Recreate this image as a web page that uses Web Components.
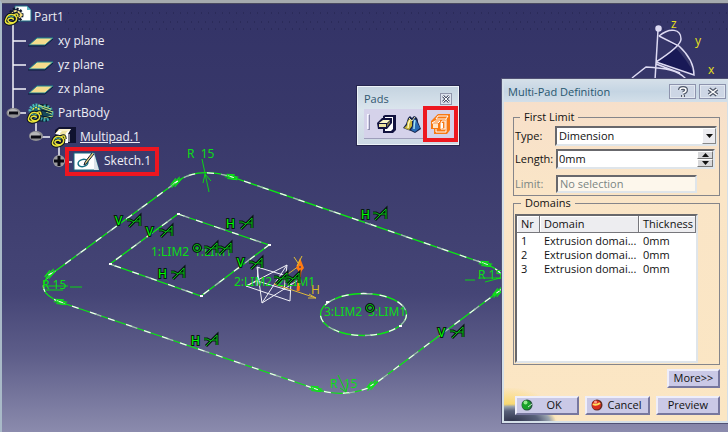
<!DOCTYPE html>
<html lang="en">
<head>
<meta charset="utf-8">
<meta name="viewport" content="width=device-width, initial-scale=1">
<title>Part1 – Multi-Pad Definition</title>
<style>
html,body{margin:0}
body{font:12px/14px "Open Sans","Noto Sans",sans-serif;background:#38386a}
</style>
</head>
<body>
<cad-workbench></cad-workbench>
<script>
const define = (name, html) => {
  const template = document.createElement('template');
  template.innerHTML = '<style>*{box-sizing:border-box}</style>' + html;
  customElements.define(name, class extends HTMLElement {
    constructor() {
      super();
      this.attachShadow({mode: 'open'}).append(template.content.cloneNode(true));
    }
  });
};

/* One row of the specification tree: artwork slot, then label slot. */
define('tree-node', `
<style>
:host{display:flex;align-items:center;gap:5px;height:24px;color:#eeeef6}
.content{display:flex;align-items:center;gap:5px}
:host([framed]){gap:4px}
:host([framed]) .content{height:21px;padding:0 4px 0 5px;outline:4px solid #ee1620}
:host([active]) .label{text-decoration:underline}
::slotted(svg){display:block;overflow:visible;flex:none}
.label{white-space:nowrap}
</style>
<slot name="rail"></slot><span class="content"><slot name="icon"></slot><span class="label"><slot></slot></span></span>`);

const plane = `<svg slot="rail" width="53" height="24" viewBox="0 0 53 24"><path class="w" d="M13 0V24M13 12H26"/><path d="M29 16L37 9H53L45 16Z" fill="#f5dc8d" stroke="#1e8790"/><path d="M28 17H45L53 10" fill="none" stroke="#0d1c3c"/></svg>`;
const swirl = `<path d="M1 7Q3 1 9 3Q13 5 11 9Q8 12 4 10Q1 7 6 6Q9 6 8 8M1 7Q-1 11 4 12Q8 12 11 9M9 3Q13 0 13 5" fill="none" stroke="#0b1422" stroke-width="3.500"/><path d="M1 7Q3 1 9 3Q13 5 11 9Q8 12 4 10Q1 7 6 6Q9 6 8 8M1 7Q-1 11 4 12Q8 12 11 9M9 3Q13 0 13 5" fill="none" stroke="#eae43a" stroke-width="1.500"/><path d="M3 5Q6 3 9 5" fill="none" stroke="#3aa5a0"/>`;

define('model-tree', `
<style>
:host{display:block;padding-top:5px;font-size:12px}
.w{stroke:#f4f4fa;stroke-width:1.5;fill:none}
</style>
<tree-node>
 <svg slot="rail" width="29" height="24" viewBox="0 0 29 24">
  <path class="w" d="M13 16V24"/>
  <path d="M15 1H27L31 5V16H15Z" fill="#fff" stroke="#1b6f80"/><path d="M27 1V5H31Z" fill="#5ab4c4"/>
  <circle cx="16" cy="10" r="6" fill="#0c1838" stroke="#101a30" stroke-width="3" stroke-dasharray="2 1.500"/><circle cx="16" cy="10" r="4" fill="none" stroke="#f0dc88" stroke-width="2" stroke-dasharray="3 1"/>
  <path d="M20 7L23 10L20 13" fill="#f3dc7a"/>
  <g transform="translate(5 7)">${swirl}</g>
 </svg>Part1</tree-node>
<tree-node>${plane}xy plane</tree-node>
<tree-node>${plane}yz plane</tree-node>
<tree-node>${plane}zx plane</tree-node>
<tree-node>
 <svg slot="rail" width="53" height="24" viewBox="0 0 53 24">
  <path class="w" d="M13 0V12H26M36 18V24"/>
  <ellipse cx="13.500" cy="12" rx="7" ry="5" fill="#8f8f93"/><ellipse cx="13" cy="11" rx="5" ry="3" fill="#b6b6b8"/><path d="M9 12H18" stroke="#0c0c14" stroke-width="3"/>
  <path d="M32 3L47 3L52 8L53 17L46 21L34 20Z" fill="#0d2438"/>
  <circle cx="36" cy="10" r="6" fill="#1b6470" stroke="#4fbac0" stroke-width="3" stroke-dasharray="2 1"/>
  <ellipse cx="45" cy="12" rx="7" ry="7" fill="#16485a" stroke="#3da4aa" stroke-width="3" stroke-dasharray="2 1.500"/>
  <path d="M38 4L51 8M42 7L53 11M44 17L53 15M46 11L52 13" stroke="#c4e070"/><path d="M41 9L52 12M42 15L52 17" stroke="#0a1428"/>
  <circle cx="36" cy="10" r="3.500" fill="none" stroke="#eee94e" stroke-width="1.500" stroke-dasharray="2 1"/>
  <g transform="translate(28 9)">${swirl}</g>
 </svg>PartBody</tree-node>
<tree-node active>
 <svg slot="rail" width="75" height="24" viewBox="0 0 75 24">
  <path class="w" d="M36 0V12H50M59 18V24"/>
  <ellipse cx="36" cy="11" rx="7" ry="5" fill="#8f8f93"/><ellipse cx="35" cy="10" rx="5" ry="3" fill="#b6b6b8"/><path d="M31 12H41" stroke="#0c0c14" stroke-width="3"/>
  <path d="M55 5L59 2H76V18H55Z" fill="#10122f"/><path d="M55 9L59 4H71L68 9V18H65V9H62V17H59V10Z" fill="#fff"/><path d="M60 8L62 6H68L66 8V15L63 17H60Z" fill="#f0e5a4"/><path d="M56 8L59 5H70" fill="none" stroke="#f6e39a"/><path d="M69 9V17" stroke="#fff"/>
  <g transform="translate(52 9)">${swirl}</g>
 </svg>Multipad.1</tree-node>
<tree-node framed>
 <svg slot="rail" width="65" height="24" viewBox="0 0 65 24">
  <path class="w" d="M59 0V8"/><circle cx="59" cy="12" r="6" fill="#9b9b9e"/><path d="M54 12H64M59 7V17" stroke="#0a0a12" stroke-width="3"/>
 </svg>
 <svg slot="icon" width="25" height="17" viewBox="0 0 25 17">
  <path d="M-5 9H-2" class="w"/><path d="M0 0H20L25 17H0Z" fill="#fff" stroke="#176d80"/><path d="M20 0L25 17H20Z" fill="#dce4ea"/>
  <ellipse cx="9" cy="10" rx="5" ry="3.500" fill="none" stroke="#136f82" stroke-width="1.500" transform="rotate(-15 9 10)"/>
  <path d="M20 1L12 11L10 12L11 9L18 0" fill="#e7d57c" stroke="#121f35"/>
 </svg>Sketch.1</tree-node>`);

/* Free drawing canvas holding the sketch, its constraints and the compass. */
define('sketch-view', `
<style>
:host{display:block;overflow:hidden;background:linear-gradient(#333367 0,#38386a 28%,#404071 52%,#454576 68%,#5d5d89 82%,#8b8bad 100%)}
svg{display:block;width:100%;height:100%}
text{font:12px "Noto Sans","Open Sans",sans-serif;white-space:pre}
.dim{fill:#0cde16}
.mark{fill:#0f0;stroke:#061a10;stroke-width:2;paint-order:stroke}
.axis{fill:#e2dc20}
</style>
<svg viewBox="0 0 728 432" preserveAspectRatio="xMinYMin slice" role="img" aria-label="Sketch with three closed domains">
<defs>
 <g id="shapes"><path d="M178 181L50 275C40 284 40 294 60 302L316 389C335 396 357 394 372 386L498 292C508 284 506 272 486 264L232 177C212 171 192 171 178 181Z"/><path d="M178 214L269 245L201 296L110 264Z"/><ellipse cx="363.500" cy="314.500" rx="43" ry="21"/></g>
 <g id="rel" fill="none"><path d="M-7 -1H-4L0 1L-5 6M0 1L6 -5V5M1 0H6" stroke="#071a10" stroke-width="3"/><path d="M-7 -1H-4L0 1L-5 6M0 1L6 -5V5M1 0H6" stroke="#07c113"/></g>
 <g id="tan" fill="none" stroke="#0be813"><ellipse rx="5" ry="1.500"/><path d="M-7 2L6 -2M-4 3L6 1M-6 -1L2 -3"/><path d="M-2 0H2" stroke="#fff"/></g>
 <g id="coin"><circle r="3.500" fill="none" stroke="#071a10" stroke-width="3"/><circle r="3.500" fill="none" stroke="#07c113"/><circle r="1" fill="#07c113"/></g>
 <pattern id="dots" width="7" height="16" patternUnits="userSpaceOnUse"><path d="M2 6h1M5 13h1" stroke="#22224c"/></pattern>
</defs>
<rect x="64" y="8" width="664" height="25" fill="url(#dots)"/>
<g fill="none" stroke-width="1.300"><use href="#shapes" stroke="#0be813"/><use href="#shapes" stroke="#f4f4f6" stroke-dasharray="7 12"/><use href="#shapes" stroke="#a9a9bf" stroke-dasharray="6 32" stroke-dashoffset="-6"/></g>
<g fill="#fff"><path d="M177 213h3v2h-3zM268 244h3v2h-3zM200 295h3v2h-3zM109 263h3v2h-3zM326 301h3v2h-3zM399 325h3v2h-3z"/></g>
<use href="#tan" transform="translate(176 182) rotate(-37)"/><use href="#tan" transform="translate(232 177) rotate(18)"/><use href="#tan" transform="translate(50 274) rotate(-37)"/><use href="#tan" transform="translate(61 302) rotate(18)"/><use href="#tan" transform="translate(316 389) rotate(18)"/><use href="#tan" transform="translate(372 385) rotate(-37)"/><use href="#tan" transform="translate(486 264) rotate(18)"/><use href="#tan" transform="translate(498 292) rotate(-37)"/>
<g fill="none" stroke="#0bd515"><path d="M202 159L209 192M205 174L203 183M205 174L211 181M43 286H68M70 287H82M45 290H63M465 280H475M485 282L504 277M478 278H504M338 375L346 392L340 388M346 392L348 383"/></g>
<g class="dim"><text x="187" y="158">R  15</text><text x="42" y="289">R 15</text><text x="478" y="279">R 15</text><text x="330" y="388">R  15</text>
<text x="151" y="256">1:LIM2</text><text x="194" y="256">1:LIM1</text></g>
<g fill="none" stroke="#f1f1f7"><path d="M258 267L257 286M246 286L287 265L284 290M246 286L290 301L291 281M257 267L262 303L300 279M257 267L300 280M262 303L287 265M246 286L257 281L291 291"/></g>
<g fill="none" stroke="#dbb83b"><path d="M274 284L316 298L309 294M316 298L308 298M274 284L299 266"/></g>
<path d="M298 291L300 270" stroke="#ff7a12" stroke-width="3"/><path d="M300 258L304 268L300 273L296 268Z" fill="#ff7a12"/><path d="M294 257L298 263M302 256L297 266" stroke="#e0c036" fill="none"/><circle cx="300" cy="267" r="1" fill="#4a4566"/>
<g class="dim"><text x="234" y="286">2:LIM2</text><text x="277" y="286">2:LIM1</text><text x="324" y="316">3:LIM2</text><text x="368" y="316">3:LIM1</text></g>
<text x="311" y="294" fill="#d8bb20">H</text>
<g class="mark"><text x="115" y="225">V</text><text x="146" y="236">V</text><text x="226" y="228">H</text><text x="361" y="219">H</text><text x="158" y="278">H</text><text x="237" y="267">V</text><text x="191" y="345">H</text><text x="438" y="337">V</text></g>
<use href="#rel" x="134" y="221"/><use href="#rel" x="166" y="231"/><use href="#rel" x="246" y="223"/><use href="#rel" x="380" y="214"/><use href="#rel" x="178" y="273"/><use href="#rel" x="256" y="263"/><use href="#rel" x="211" y="340"/><use href="#rel" x="457" y="332"/><use href="#rel" x="211" y="248"/><use href="#rel" x="225" y="248"/><use href="#rel" x="281" y="278"/><use href="#rel" x="293" y="278"/>
<use href="#coin" x="197" y="248"/><use href="#coin" x="370" y="308"/>
<g fill="none" stroke="#dedbf3" stroke-width="1.500"><path d="M659 36Q678 44 695 75L656 62L680 45Z" fill="#191956" stroke="none"/><path d="M658 30L655 80M659 36C670 27 681 29 681 39Q681 46 656 62M659 36L679 46Q694 60 694 75L656 62M632 78L646 67C665 68 678 70 686 79M656 64L680 73"/><circle cx="658.500" cy="28.500" r="2.500" fill="#dedbf3"/></g>
<g class="axis"><text x="671" y="28">z</text><text x="695" y="45">y</text><text x="708" y="74">x</text></g>
</svg>`);

define('pads-toolbar', `
<style>
:host{display:block;width:102px;padding:2px 3px 5px 6px;border:1px solid #edf3f8;outline:1px solid #26264f;background:linear-gradient(#c5d4e1,#dbe5ed 40%,#cdd9e4);font-size:11px}
header{display:flex;align-items:center;justify-content:space-between;height:20px;padding-right:3px;color:#31576f}
.close{width:12px;height:12px;padding:0;border:1px solid #9197ac;background:#dce2ed;display:grid;place-items:center}
.tools{display:flex;align-items:center;height:30px;gap:5px;background:#d5d2ea;border-bottom:1px solid #9e9ebb}
.grip{width:3px;height:16px;border:1px solid;border-color:#f7f7ff #8e8eae #8e8eae #f7f7ff;margin:0 2px 3px 3px}
.tool{width:20px;height:22px;padding:0;border:0;background:none;display:grid;place-items:center}
.tool[aria-pressed=true]{outline:4px solid #ed1820;width:27px;height:28px}
svg{display:block}
</style>
<header><span>Pads</span><button class="close" aria-label="Close"><svg width="8" height="8" viewBox="0 0 8 8"><path d="M1 1L7 7M7 1L1 7" stroke="#4e566c" stroke-width="2.500"/><path d="M1 1L7 7M7 1L1 7" stroke="#fff"/></svg></button></header>
<div class="tools"><span class="grip"></span>
<button class="tool" aria-label="Drafted filleted pad"><svg width="20" height="20" viewBox="0 0 20 20"><path d="M6 2L8 1H19V16L16 19H6Z" fill="#12123f"/><path d="M8 3H16V15L14 17H8Z" fill="#fff"/><path d="M0 9L5 4H15V9L10 15H1Z" fill="#12123f"/><path d="M2 9L6 6H13L10 9Z" fill="#fbf6c4"/><path d="M2 10H9V13H2Z" fill="#eee4a0"/><path d="M10 10L13 7V9L10 13Z" fill="#8a814c"/></svg></button>
<button class="tool" aria-label="Pad"><svg width="20" height="20" viewBox="0 0 20 20"><path d="M6 4L8 2L10 4L12 2Q16 3 16 8L19 15L13 19L9 17L6 16L1 14L4 10Z" fill="#14204a"/><path d="M7 5Q5 7 5 11L2 14L7 16L10 12V6Z" fill="#c9b43b"/><path d="M8 6Q6 9 6 14" stroke="#fff8b7" stroke-width="1.500" fill="none"/><path d="M11 6Q14 4 15 8L18 14L13 18L9 16L11 12Z" fill="#2a6cb4"/><path d="M13 6Q12 10 12 15" stroke="#a7e1f0" stroke-width="1.500" fill="none"/><path d="M7 4L10 7L13 3" fill="none" stroke="#e9e3b0"/></svg></button>
<button class="tool" aria-label="Multi-pad" aria-pressed="true"><svg width="21" height="20" viewBox="0 0 21 20"><path d="M4 4L8 0H20V16L17 20H4V15H1V7Z" fill="#f87914"/><path d="M6 5L8 2H18L16 5H6M16 5V18H6V15" fill="none" stroke="#fff"/><path d="M2 9L5 7H10L8 9ZM11 9L12 7H15V15H11Z" fill="none" stroke="#fff"/><path d="M3 10H8V14H3Z" fill="#ffe6c8"/><path d="M12 9V14" stroke="#fff" stroke-width="2"/></svg></button>
</div>`);

define('push-button', `
<style>
:host{display:block}
button{display:flex;align-items:center;width:100%;height:19px;padding:0 2px 1px;border:2px solid;border-color:#eeeefa #77779e #77779e #eeeefa;background:#cac9e6;font:inherit;color:#111}
span{flex:1;text-align:center;white-space:nowrap}
::slotted(svg){flex:none;display:block;margin-left:2px}
</style>
<button><slot name="icon"></slot><span><slot></slot></span></button>`);

define('multi-pad-dialog', `
<style>
:host{display:block;border:2px solid #d4dfe8;border-right-width:1px;outline:1px solid #515174;background:linear-gradient(#f6decb,#fae5c7 30%,#fbe6c3);color:#111;font-size:11px}
header{display:flex;align-items:center;gap:3px;height:21px;padding:0 1px 0 4px;background:linear-gradient(#d3dee8,#c5d5e3 50%,#d3dfe9);color:#27566e}
h1{flex:1;margin:0;font:inherit;white-space:nowrap}
header button{width:27px;height:15px;padding:0;border:1px solid #8d93ad;background:#cdd6e5;display:grid;place-items:center;box-shadow:inset 0 0 0 1px #e1e7f0}
header svg{display:block}
form{display:block;padding:8px 7px 6px 9px}
fieldset{min-width:0;margin:0;padding:2px 2px 2px 0;border:1px solid #85858a}
legend{margin-left:6px;padding:0 4px}
.limits{display:grid;grid-template-columns:41px 1fr;row-gap:3px;align-items:center}
.limits label{padding-left:1px}
.limits .off{color:#7b8583}
.combo{display:grid;grid-template-columns:1fr 15px}
.combo select{grid-area:1/1/2/3}
.combo i{grid-area:1/2;margin:2px 1px 2px 0;background:#ececf0;border:1px solid;border-color:#fff #888 #888 #fff;pointer-events:none;display:grid;place-items:center}
select,input{width:100%;min-width:0;height:20px;margin:0;padding:0 2px 1px;border:2px solid;border-color:#68686c #dfe5ea #dfe5ea #68686c;background:#fff;font:inherit;color:#111;border-radius:0;appearance:none;outline:0}
.spin{display:grid;grid-template-columns:1fr 16px;grid-template-rows:8px 8px;margin:0 2px 0 1px;border:2px solid;border-color:#68686c #dfe5ea #dfe5ea #68686c;height:20px;background:#fff}
.spin input{grid-row:1/3;border:0;height:16px;padding:0 1px 1px}
.spin button{padding:0;border:1px solid;border-color:#fff #777 #777 #fff;background:#d8d8da;display:grid;place-items:center}
.spin svg,.combo svg{display:block}
.ref{margin:3px 20px 0 1px;height:18px;width:auto;background:#fdf7ec;color:#7b8583}
.off{margin-top:3px}
.domains{padding:4px 21px 1px 1px}
.list{height:149px;border:2px solid;border-color:#68686c #dfe5ea #dfe5ea #68686c;background:#fff}
table{width:100%;border-collapse:separate;border-spacing:0;table-layout:fixed}
th{height:17px;padding:0 0 0 4px;text-align:left;font-weight:400;background:#ededf0;border-right:1px solid #77777c;border-bottom:1px solid #77777c;box-shadow:inset 1px 1px #fff;white-space:nowrap}
td{height:14px;padding:0 0 0 4px;white-space:nowrap}
tbody:before{content:"";display:block;height:1px}
.more{display:flex;justify-content:flex-end;margin-top:4px}
.more push-button{width:53px}
.actions{display:grid;grid-template-columns:repeat(3,1fr);gap:6px;padding:8px 0 0 2px}
.foot{background:radial-gradient(ellipse 44px 17px at 8px 100%,#30344c 0,#59617a 60%,#9aa3ae 85%,transparent 100%) no-repeat,radial-gradient(ellipse 50px 34px at 4px 100%,#f8d660 40%,transparent) no-repeat;margin:0 -7px -6px -9px;padding:0 7px 6px 9px}
</style>
<header><h1>Multi-Pad Definition</h1>
<button aria-label="Help"><svg width="12" height="12" viewBox="0 0 12 12"><path d="M3 4Q3 2 6 2Q9 2 9 4Q9 6 6 7M6 9V11" fill="none" stroke="#50596a" stroke-width="4"/><path d="M3 4Q3 2 6 2Q9 2 9 4Q9 6 6 7M6 9V11" fill="none" stroke="#fff" stroke-width="1.500"/></svg></button>
<button aria-label="Close"><svg width="12" height="10" viewBox="0 0 12 10"><path d="M2 2L10 8M10 2L2 8" stroke="#50596a" stroke-width="4"/><path d="M2 2L10 8M10 2L2 8" stroke="#fff" stroke-width="1.500"/></svg></button></header>
<form onsubmit="return false">
<fieldset><legend>First Limit</legend>
<div class="limits">
<label for="type">Type:</label><div class="combo"><select id="type"><option>Dimension</option></select><i><svg width="7" height="4" viewBox="0 0 7 4"><path d="M0 0H7L3.500 4Z" fill="#111"/></svg></i></div>
<label for="length">Length:</label><div class="spin"><input id="length" value="0mm"><button type="button" aria-label="Increase"><svg width="7" height="4" viewBox="0 0 7 4"><path d="M0 4H7L3.500 0Z" fill="#111"/></svg></button><button type="button" aria-label="Decrease"><svg width="7" height="4" viewBox="0 0 7 4"><path d="M0 0H7L3.500 4Z" fill="#111"/></svg></button></div>
<label class="off" for="limit">Limit:</label><input class="ref" id="limit" value="No selection" readonly>
</div></fieldset>
<fieldset class="domains"><legend>Domains</legend>
<div class="list"><table><colgroup><col style="width:23px"><col><col style="width:57px"></colgroup><thead><tr><th>Nr</th><th>Domain</th><th>Thickness</th></tr></thead>
<tbody><tr><td>1</td><td>Extrusion domai...</td><td>0mm</td></tr><tr><td>2</td><td>Extrusion domai...</td><td>0mm</td></tr><tr><td>3</td><td>Extrusion domai...</td><td>0mm</td></tr></tbody></table></div>
</fieldset>
<div class="more"><push-button>More&gt;&gt;</push-button></div>
<div class="foot"><div class="actions">
<push-button><svg slot="icon" width="12" height="12" viewBox="0 0 12 12"><circle cx="6" cy="6" r="5.500" fill="#26533c"/><circle cx="5.500" cy="6" r="4.500" fill="#18a22a"/><circle cx="4.500" cy="3.500" r="2" fill="#93ec8e"/><path d="M7 8L11 5" stroke="#cde3d0"/></svg>OK</push-button>
<push-button><svg slot="icon" width="12" height="12" viewBox="0 0 12 12"><circle cx="6" cy="6" r="5.500" fill="#612b22"/><circle cx="5.500" cy="6" r="4.500" fill="#d72f1e"/><path d="M2 5Q5 7 9 4" stroke="#ffe05c" stroke-width="2" fill="none"/><circle cx="4.500" cy="3" r="1.500" fill="#ffa08a"/></svg>Cancel</push-button>
<push-button>Preview</push-button>
</div></div>
</form>`);

define('cad-workbench', `
<style>
:host{display:grid;grid-template:minmax(100vh,auto) / 1fr;position:relative;overflow:hidden}
sketch-view,.desk{grid-area:1/1;min-width:0;min-height:0}
sketch-view{height:100vh}
.desk{position:relative;border-top:3px solid #a5aaae;border-left:2px solid #a9bac8;box-shadow:inset 0 1px #4a4a60}
model-tree{margin:-3px 0 0 -2px;width:max-content}
pads-toolbar{position:absolute;left:355px;top:83px}
multi-pad-dialog{position:absolute;right:0;top:76px;width:226px}
</style>
<sketch-view></sketch-view>
<div class="desk"><model-tree></model-tree><pads-toolbar></pads-toolbar><multi-pad-dialog></multi-pad-dialog></div>`);
</script>
</body>
</html>
